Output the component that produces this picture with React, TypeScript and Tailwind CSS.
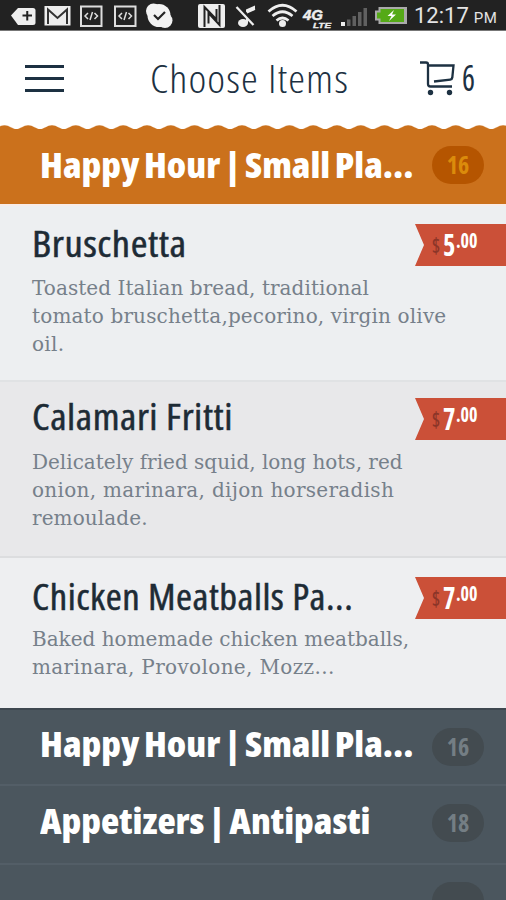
import type { ReactNode } from "react";

type MenuItem = {
  name: string;
  nameFit: string;
  lines: { text: string; fit: string }[];
  dollars: string;
  row: string;
  descGap: string;
  ribbonGap: string;
};

const items: MenuItem[] = [
  {
    name: "Bruschetta",
    nameFit: "scale-x-[1.125]",
    lines: [
      { text: "Toasted Italian bread, traditional", fit: "tracking-[0.06px]" },
      { text: "tomato bruschetta,pecorino, virgin olive", fit: "tracking-[0.15px]" },
      { text: "oil.", fit: "tracking-[0.3px]" },
    ],
    dollars: "5",
    row: "h-[176px] pt-[18px] bg-[#edeff1] border-b-2 border-[#e0e2e4]",
    descGap: "mt-[11px]",
    ribbonGap: "mt-0",
  },
  {
    name: "Calamari Fritti",
    nameFit: "scale-x-[1.105]",
    lines: [
      { text: "Delicately fried squid, long hots, red", fit: "tracking-[0px]" },
      { text: "onion, marinara, dijon horseradish", fit: "tracking-[0.3px]" },
      { text: "remoulade.", fit: "tracking-[0.1px]" },
    ],
    dollars: "7",
    row: "h-[176px] pt-[15px] bg-[#e8e8ea] border-b-2 border-[#dcdddf]",
    descGap: "mt-[12px]",
    ribbonGap: "mt-px",
  },
  {
    name: "Chicken Meatballs Pa...",
    nameFit: "scale-x-[1.075]",
    lines: [
      { text: "Baked homemade chicken meatballs,", fit: "tracking-[0px]" },
      { text: "marinara, Provolone, Mozz...", fit: "tracking-[0.35px]" },
    ],
    dollars: "7",
    row: "h-[150px] pt-[19px] bg-[#eeeff1]",
    descGap: "mt-[9px]",
    ribbonGap: "mt-0",
  },
];

export default function App() {
  return (
    <div className="w-[506px] h-[900px] overflow-hidden bg-white font-['Open_Sans',sans-serif] [font-stretch:75%]">
      <StatusBar />
      <Header />
      <Wave />
      <div className="h-[75px] bg-[#cb711c] flex items-start pl-[40px] pr-[22px] pt-[16px]">
        <SectionTitle>Happy Hour | Small Pla...</SectionTitle>
        <CountBadge className="mt-px bg-[#b55500] text-[#db8b0b]">16</CountBadge>
      </div>
      <div className="h-[2px] bg-[#f8ece7]" />
      {items.map((item) => (
        <ItemRow key={item.name} item={item} />
      ))}
      <div className="bg-[#4b565e] border-t-2 border-[#3e4850]">
        <div className="h-[76px] flex items-start pl-[40px] pr-[22px] pt-[14px] border-b-2 border-[#535e67]">
          <SectionTitle>Happy Hour | Small Pla...</SectionTitle>
          <CountBadge className="mt-[4px] bg-[#434b50] text-[#747e84]">16</CountBadge>
        </div>
        <div className="h-[79px] flex items-start pl-[40px] pr-[22px] pt-[15px] border-b-2 border-[#535e67]">
          <SectionTitle>Appetizers | Antipasti</SectionTitle>
          <CountBadge className="mt-[3px] bg-[#434b50] text-[#747e84]">18</CountBadge>
        </div>
        <div className="h-[79px] flex items-start pl-[40px] pr-[22px] pt-[17px]">
          <CountBadge className="bg-[#434b50] text-[#747e84]">{""}</CountBadge>
        </div>
      </div>
    </div>
  );
}

function Header() {
  return (
    <div className="h-[94px] flex items-start text-[#1d3142]">
      <div className="ml-[25px] mt-[34px] w-[39px] flex flex-col gap-[9px]">
        <span className="h-[3px] bg-[#1d3142]" />
        <span className="h-[3px] bg-[#1d3142]" />
        <span className="h-[3px] bg-[#1d3142]" />
      </div>
      <h1 className="ml-[86px] mt-[27px] w-[201px] whitespace-nowrap text-[39px] leading-[40px] font-light tracking-[1px] origin-left scale-x-[1.09]">
        Choose Items
      </h1>
      <svg className="ml-[68px] mt-[29px] w-[37px] h-[36px]" viewBox="0 0 37 36" fill="none" stroke="#1d3142" strokeWidth="2.3">
        <path d="M1 2.5h6q2 0 2 2V24q0 2.5 2.5 2.5H33" />
        <path d="M9 5.5h25.5l-1.200 12q-.3 2-2 2.200L15 21.500" />
        <circle cx="11.500" cy="32.500" r="2.700" fill="#1d3142" stroke="none" />
        <circle cx="30.500" cy="32.500" r="2.700" fill="#1d3142" stroke="none" />
      </svg>
      <span className="ml-[6px] mt-[27px] text-[36px] leading-[40px] origin-left scale-x-[0.85]">6</span>
    </div>
  );
}

function Wave() {
  return (
    <svg className="block w-[506px] h-[4px] bg-white" viewBox="0 0 506 4">
      <defs>
        <pattern id="scallop" x="-7.400" width="23.750" height="4" patternUnits="userSpaceOnUse">
          <path d="M0 4C4 4 7 .2 11.875 .2S19.750 4 23.750 4z" fill="#cb711c" />
        </pattern>
      </defs>
      <rect width="506" height="4" fill="url(#scallop)" />
    </svg>
  );
}

function SectionTitle({ children }: { children: ReactNode }) {
  return (
    <h2 className="w-[391px] shrink-0 whitespace-nowrap text-[36px] leading-[40px] font-extrabold text-white">
      <span className="inline-block origin-left scale-x-[1.045] [word-spacing:-2px]">{children}</span>
    </h2>
  );
}

function CountBadge({ children, className }: { children: ReactNode; className: string }) {
  return (
    <span
      className={`ml-auto w-[52px] h-[38px] rounded-full flex items-center justify-center text-[24px] leading-none font-bold ${className}`}
    >
      {children}
    </span>
  );
}

function ItemRow({ item }: { item: MenuItem }) {
  return (
    <div className={`pl-[32px] ${item.row}`}>
      <div className="flex items-start justify-between h-[40px]">
        <h3
          className={`whitespace-nowrap text-[36px] leading-[40px] font-medium tracking-[0.5px] text-[#1d2b35] [-webkit-text-stroke:0.500px_#1d2b35] origin-left ${item.nameFit}`}
        >
          {item.name}
        </h3>
        <PriceTag dollars={item.dollars} className={item.ribbonGap} />
      </div>
      <p
        className={`whitespace-nowrap font-['DejaVu_Serif',serif] [font-stretch:100%] text-[20px] leading-[27.800px] text-[#76808a] ${item.descGap}`}
      >
        {item.lines.map((line) => (
          <span key={line.text} className={`block w-max ${line.fit}`}>
            {line.text}
          </span>
        ))}
      </p>
    </div>
  );
}

function PriceTag({ dollars, className }: { dollars: string; className: string }) {
  return (
    <div
      className={`w-[91px] h-[42px] shrink-0 pl-[17px] flex items-start bg-[#cb5038] [clip-path:polygon(0_0,100%_0,100%_100%,0_100%,9px_50%)] ${className}`}
    >
      <span className="w-[11px] mt-[9px] text-[21px] leading-[24px] font-semibold text-[#8b3528] origin-left scale-x-[0.85]">$</span>
      <span className="w-[13px] mt-[5px] text-[31px] leading-[30px] font-bold text-white origin-left scale-x-[0.85]">{dollars}</span>
      <span className="mt-[4px] text-[21px] leading-[24px] font-bold text-white origin-left scale-x-[0.86]">.00</span>
    </div>
  );
}

function StatusBar() {
  return (
    <div className="h-[31px] bg-[#222] border-b border-[#777] flex items-center">
      <svg className="w-[405px] h-[30px] shrink-0" viewBox="0 0 405 30">
        {/* Back-shaped add badge */}
        <path d="M11 15.500 18 8h15q2.500 0 2.500 2.500v12q0 2.500-2.500 2.500H18z" fill="#eee" />
        <path d="M22.500 15.500h9.500M27.250 11v9.500" stroke="#222" strokeWidth="2" />
        {/* Mail */}
        <rect x="44.500" y="6" width="26" height="19.500" fill="#eee" />
        <path d="M48 24V9.500l9.500 8.500 9.500-8.500V24" fill="none" stroke="#333" strokeWidth="2" />
        <DevIcon x={80} />
        <DevIcon x={114} />
        {/* Check bubble */}
        <circle cx="159" cy="15.500" r="11.500" fill="#f2f2f2" />
        <circle cx="153.500" cy="11" r="7.500" fill="#f2f2f2" />
        <circle cx="165" cy="20.500" r="7.500" fill="#f2f2f2" />
        <path d="m154 15 4 4 7-7" fill="none" stroke="#222" strokeWidth="2.200" />
        {/* NFC */}
        <rect x="198" y="4" width="27" height="24" rx="2" fill="#eee" />
        <path d="M204.500 27V7l12 12.500V9M208.500 23.500V13l11 12V5" fill="none" stroke="#222" strokeWidth="2" />
        {/* Muted note */}
        <path d="M247 23V11.500l8-3" fill="none" stroke="#eee" strokeWidth="2" />
        <path d="M246 9.500 255 5.500v4.500l-9 4z" fill="#eee" />
        <ellipse cx="243" cy="23" rx="5" ry="4" fill="#eee" />
        <path d="m238.500 6.500 16 17" stroke="#222" strokeWidth="4" />
        <path d="m236.500 7 17 18" stroke="#eee" strokeWidth="2.300" />
        {/* Wifi */}
        <g fill="none" stroke="#eee" strokeWidth="2.700">
          <path d="M268.500 11.500q14-12.500 28 0" />
          <path d="M272.500 16q10-8.500 20 0" />
          <path d="M276.500 20.500q6-5 12 0" />
        </g>
        <circle cx="282.500" cy="23.500" r="3.500" fill="#eee" />
        <text x="303" y="19.500" fontSize="15" fontWeight="700" fontStyle="italic" fill="#eee" stroke="#eee" strokeWidth=".5" textLength="20" lengthAdjust="spacingAndGlyphs" fontFamily="Liberation Sans, sans-serif">
          4G
        </text>
        <text x="313" y="28" fontSize="7.500" fontWeight="700" fontStyle="italic" fill="#eee" stroke="#eee" strokeWidth=".3" textLength="18" lengthAdjust="spacingAndGlyphs" fontFamily="Liberation Sans, sans-serif">
          LTE
        </text>
        {/* Signal */}
        <rect x="341" y="22" width="4" height="4" fill="#eee" />
        <g fill="#606060">
          <rect x="347" y="19.500" width="3.500" height="6.500" />
          <rect x="352.500" y="16" width="3.500" height="10" />
          <rect x="358" y="12" width="3.500" height="14" />
          <rect x="363.500" y="8" width="3.500" height="18" />
        </g>
        {/* Battery */}
        <path d="M379.500 8H405v15h-25.500v-3.500H376v-8h3.500z" fill="#55aa17" stroke="#aaa" strokeWidth="2" />
        <path d="m394 10-6.500 6h4l-2.500 5 7-6.500h-4z" fill="#fff" />
      </svg>
      <span className="w-[2px] h-[17px] bg-[#aaa]" />
      <span className="ml-[7px] mt-[3px] flex items-baseline font-[Roboto,sans-serif] [font-stretch:100%] text-[#e4e4e4] whitespace-nowrap">
        <span className="text-[22px] leading-[26px]">12:17</span>
        <span className="ml-[5px] text-[15px] tracking-[0.5px]">PM</span>
      </span>
    </div>
  );
}

function DevIcon({ x }: { x: number }) {
  return (
    <g transform={`translate(${x} 5.500)`}>
      <rect x="1" y="1" width="20.500" height="19.500" fill="#222" stroke="#ddd" strokeWidth="2" />
      <path d="m8 7.500-3 3 3 3M14.500 7.500l3 3-3 3M12.500 6.500l-2.500 8" fill="none" stroke="#ddd" strokeWidth="1.500" />
    </g>
  );
}
